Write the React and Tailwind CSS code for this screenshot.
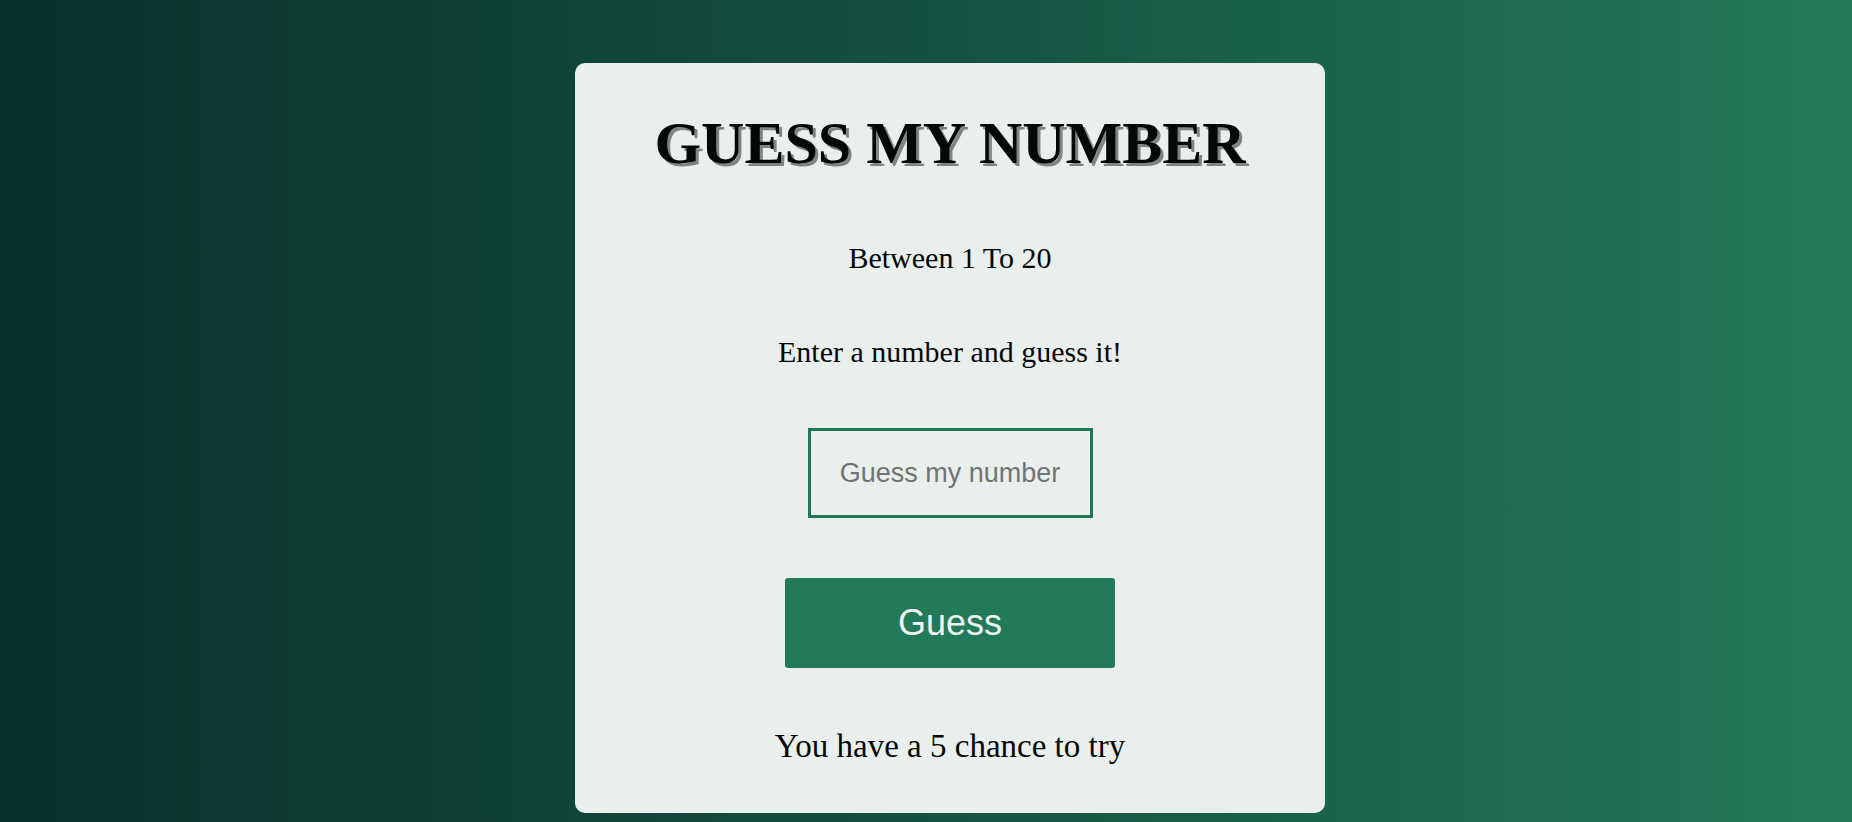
import React, { useState } from 'react';

export default function App() {
  const [guess, setGuess] = useState('');
  const [chances, setChances] = useState(5);

  const handleGuess = () => {
    if (!guess) return;
    setChances((c) => (c > 0 ? c - 1 : 0));
    setGuess('');
  };

  return (
    <div className="w-full h-[822px] bg-gradient-to-r from-[#08302a] via-[#155141] to-[#237b59] overflow-hidden">
      <div className="flex justify-center pl-12 pt-[63px]">
        {/* Game card */}
        <div className="w-[750px] h-[750px] bg-[#e9efed] rounded-[10px] flex flex-col items-center pt-[50px] font-['Liberation_Serif',serif] text-[#050807]">
          <h1 className="text-[60px] leading-none font-bold [text-shadow:3px_3px_0_#7f8582]">
            GUESS MY NUMBER
          </h1>

          <p className="mt-[70px] text-[30px] leading-none">Between 1 To 20</p>

          <p className="mt-[64px] text-[30px] leading-none">Enter a number and guess it!</p>

          <input
            type="text"
            inputMode="numeric"
            value={guess}
            onChange={(e) => setGuess(e.target.value)}
            placeholder="Guess my number"
            className="mt-[61px] w-[285px] h-[90px] px-2 border-[3px] border-[#217654] bg-transparent text-center text-[27px] font-['Liberation_Sans',Arial,sans-serif] text-[#333] placeholder-[#6f7471] outline-none"
          />

          <button
            onClick={handleGuess}
            className="mt-[60px] w-[330px] h-[90px] rounded-[3px] bg-[#237a58] text-[#eef3f1] text-[36px] font-['Liberation_Sans',Arial,sans-serif]"
          >
            Guess
          </button>

          <p className="mt-[62px] text-[33px] leading-none">You have a {chances} chance to try</p>
        </div>
      </div>
    </div>
  );
}
